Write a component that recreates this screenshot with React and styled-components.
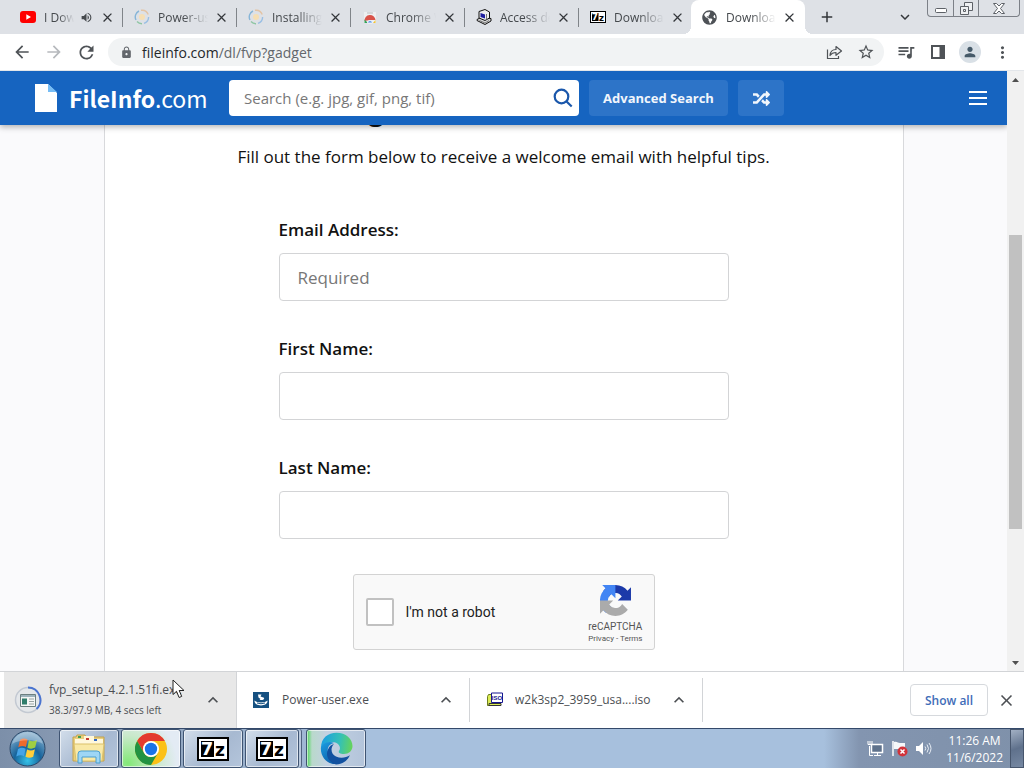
import React from "react";
import styled, { createGlobalStyle, css } from "styled-components";
import {
  MdAdd,
  MdArrowBack,
  MdArrowForward,
  MdClose,
  MdExpandLess,
  MdExpandMore,
  MdLock,
  MdMoreVert,
  MdPerson,
  MdQueueMusic,
  MdRefresh,
  MdStarBorder,
  MdVolumeUp,
} from "react-icons/md";
import { FaGlobeAmericas, FaRandom } from "react-icons/fa";

const GlobalStyle = createGlobalStyle`
  * {
    box-sizing: border-box;
  }

  body {
    margin: 0;
    font-family: "Open Sans", "Noto Sans", sans-serif;
    color: #111;
    overflow: hidden;
  }

  button, input {
    font-family: inherit;
  }

  button {
    padding: 0;
    border: none;
    background: none;
    color: inherit;
    cursor: pointer;
  }

  svg {
    flex: none;
  }
`;

const Desktop = styled.div`
  display: flex;
  flex-direction: column;
  height: 100vh;
`;

// Tab strip
const TabStrip = styled.div`
  display: flex;
  height: 34px;
  padding-left: 9px;
  background: #dee1e6;
`;

const Tab = styled.div`
  position: relative;
  display: flex;
  align-items: center;
  flex: 0 1 114px;
  min-width: 0;
  padding: 0 8px 0 11px;
  font-size: 12px;
  color: #45494d;

  ${({ $divided }) =>
    $divided &&
    css`
      &::after {
        content: "";
        position: absolute;
        right: 0;
        top: 8px;
        width: 1px;
        height: 19px;
        background: #808489;
      }
    `}

  ${({ $active }) =>
    $active &&
    css`
      margin-left: -2px;
      background: #fff;
      border-radius: 8px 8px 0 0;

      &::before,
      &::after {
        content: "";
        position: absolute;
        bottom: 0;
        width: 8px;
        height: 8px;
      }

      &::before {
        right: 100%;
        background: radial-gradient(circle at 0 0, #dee1e6 8px, #fff 8px);
      }

      &::after {
        left: 100%;
        background: radial-gradient(circle at 100% 0, #dee1e6 8px, #fff 8px);
      }
    `}
`;

const TabIcon = styled.span`
  display: flex;
  flex: none;
  width: 16px;
  color: #4d5156;
`;

const TabTitle = styled.span`
  flex: 1;
  min-width: 0;
  margin: 0 6px 0 8px;
  overflow: hidden;
  white-space: nowrap;
  mask-image: linear-gradient(to right, #000 50%, transparent);
`;

const TabClose = styled.button`
  display: flex;
  flex: none;
  margin-left: ${({ $gap }) => $gap || 0}px;
  color: #33363a;
`;

const StripButton = styled.button`
  display: flex;
  align-items: center;
  justify-content: center;
  width: 44px;
  height: 34px;
  color: #33363a;
`;

const StripSpacer = styled.div`
  flex: 1;
`;

const WindowControls = styled.div`
  display: flex;
  height: 17px;
  margin: 0 4px 0 0;
  border: 1px solid #7c8087;
  border-top: none;
  border-radius: 0 0 4px 4px;
`;

const WindowButton = styled.button`
  display: flex;
  align-items: center;
  justify-content: center;
  width: ${({ $wide }) => ($wide ? 41 : 25)}px;

  & + & {
    border-left: 1px solid #7c8087;
  }
`;

// Address bar
const Toolbar = styled.div`
  display: flex;
  align-items: center;
  height: 37px;
  padding: 0 6px;
  border-bottom: 1px solid #e3e6ea;
  background: #fff;
`;

const ToolButton = styled.button`
  display: flex;
  align-items: center;
  justify-content: center;
  flex: none;
  width: 32px;
  height: 28px;
  color: ${({ $muted }) => ($muted ? "#b6b9bd" : "#4f5357")};
`;

const AddressBox = styled.div`
  display: flex;
  align-items: center;
  flex: 1;
  height: 28px;
  margin: 0 6px;
  padding: 0 2px 0 12px;
  border-radius: 14px;
  background: #f1f3f4;
  font-size: 14px;
  color: #63676c;
`;

const Url = styled.span`
  flex: 1;
  margin-left: 9px;

  b {
    font-weight: 400;
    color: #24272a;
  }
`;

const Avatar = styled.span`
  display: flex;
  align-items: center;
  justify-content: center;
  width: 22px;
  height: 22px;
  border-radius: 50%;
  background: #d9e0e6;
  color: #465a69;
`;

// Web page
const Viewport = styled.div`
  display: flex;
  flex: 1;
  min-height: 0;
`;

const Site = styled.div`
  display: flex;
  flex-direction: column;
  flex: 1;
  min-width: 0;
  overflow: hidden;
  background: #fafafc;
`;

const SiteHeader = styled.header`
  position: relative;
  z-index: 1;
  display: flex;
  align-items: center;
  flex: none;
  gap: 10px;
  height: 54px;
  padding: 0 20px 0 35px;
  background: #1664c0;
  box-shadow: 0 2px 6px rgba(0, 0, 0, 0.3);
`;

const Logo = styled.a`
  display: flex;
  align-items: center;
  flex: none;
  gap: 12px;
  width: 184px;
  font-family: "Noto Sans CJK SC", sans-serif;
  font-size: 23px;
  line-height: 36px;
  color: #fff;
  text-decoration: none;
`;

const SearchForm = styled.form`
  display: flex;
  align-items: center;
  flex: 0 1 350px;
  height: 36px;
  padding: 0 6px 0 15px;
  border-radius: 4px;
  background: #fff;
`;

const SearchInput = styled.input`
  flex: 1;
  min-width: 0;
  padding: 0;
  border: none;
  outline: none;
  font-size: 15px;

  &::placeholder {
    color: #777;
  }
`;

const SearchButton = styled.button`
  display: flex;
`;

const HeaderButton = styled.button`
  display: flex;
  align-items: center;
  justify-content: center;
  width: ${({ $width }) => $width}px;
  height: 36px;
  border-radius: 4px;
  background: #2d74c8;
  font-size: 13px;
  font-weight: 700;
  white-space: nowrap;
  color: #f1f6fc;
`;

const MenuButton = styled.button`
  display: flex;
  margin-left: auto;
`;

const Article = styled.main`
  display: flex;
  flex-direction: column;
  align-items: center;
  flex: 1;
  width: 100%;
  max-width: 800px;
  min-height: 0;
  margin: 0 auto;
  border: solid #d8d9dc;
  border-width: 0 1px;
  background: #fff;
`;

const Heading = styled.h1`
  flex: none;
  margin: -38px 0 13px;
  font-size: 28px;
  line-height: 44px;
`;

const Intro = styled.p`
  margin: 0 0 47px;
  font-size: 17px;
  line-height: 26px;
`;

const SignupForm = styled.form`
  display: flex;
  flex-direction: column;
  gap: 35px;
  width: 450px;
  max-width: 100%;
`;

const Field = styled.div`
  display: flex;
  flex-direction: column;
  gap: 11px;
`;

const FieldLabel = styled.label`
  font-size: 17px;
  font-weight: 600;
  line-height: 25px;
`;

const FieldInput = styled.input`
  height: 48px;
  padding: 0 18px;
  border: 1px solid #d3d4d6;
  border-radius: 4px;
  outline: none;
  font-size: 17px;

  &::placeholder {
    color: #777;
  }
`;

const Captcha = styled.div`
  display: flex;
  align-items: center;
  align-self: center;
  width: 302px;
  height: 76px;
  padding: 0 11px 0 12px;
  border: 1px solid #d3d3d3;
  border-radius: 3px;
  background: #f9f9f9;
  font-family: Roboto, sans-serif;
`;

const CaptchaCheck = styled.input`
  appearance: none;
  width: 28px;
  height: 28px;
  margin: 0 12px 0 0;
  border: 2px solid #c1c1c1;
  border-radius: 2px;
  background: #fff;
`;

const CaptchaLabel = styled.label`
  flex: 1;
  font-size: 14px;
  line-height: 17px;
  color: #222;
`;

const CaptchaBrand = styled.div`
  display: flex;
  flex-direction: column;
  align-items: center;
  padding-top: 6px;
  font-size: 10px;
  line-height: 13px;
  color: #555;

  svg {
    margin-bottom: 4px;
  }
`;

const CaptchaLinks = styled.span`
  font-size: 8px;
  line-height: 12px;

  a {
    color: inherit;
    text-decoration: none;
  }
`;

const Scrollbar = styled.div`
  display: flex;
  flex-direction: column;
  justify-content: space-between;
  align-items: center;
  flex: none;
  width: 17px;
  background: #f1f1f1;
`;

const ScrollArrow = styled.button`
  display: flex;
  align-items: center;
  justify-content: center;
  width: 17px;
  height: 17px;
`;

const ScrollTrack = styled.div`
  display: grid;
  grid-template-rows: 147fr 294fr 125fr;
  flex: 1;
  width: 13px;
`;

const ScrollThumb = styled.div`
  grid-row: 2;
  background: #c1c1c1;
`;

// Downloads
const DownloadBar = styled.div`
  display: flex;
  align-items: center;
  height: 57px;
  padding: 0 8px 0 4px;
  border-top: 1px solid #d2d4d7;
  background: #fff;
`;

const DownloadItem = styled.div`
  position: relative;
  display: flex;
  align-items: center;
  flex: 0 1 233px;
  min-width: 0;
  height: ${({ $hovered }) => ($hovered ? 56 : 44)}px;
  padding: 0 13px 0 ${({ $hovered }) => ($hovered ? 10 : 16)}px;
  border-right: 1px solid #d2d4d7;
  background: ${({ $hovered }) => ($hovered ? "#e8e8e8" : "#fff")};
  color: #4c4f53;
`;

const DownloadText = styled.div`
  flex: 1;
  min-width: 0;
  margin-left: ${({ $gap }) => $gap}px;
  overflow: hidden;
  white-space: nowrap;
  font-size: 12px;
  line-height: 20px;
`;

const DownloadStatus = styled.div`
  font-size: 10px;
`;

const ItemMenu = styled.button`
  display: flex;
  margin-left: 4px;
`;

const ShowAll = styled.button`
  width: 78px;
  height: 32px;
  margin: 0 9px 0 auto;
  border: 1px solid #d6d9dd;
  border-radius: 4px;
  font-size: 12px;
  font-weight: 600;
  color: #3f6db8;
`;

const BarClose = styled.button`
  display: flex;
  color: #4c4f53;
`;

const Cursor = styled.svg`
  position: absolute;
  left: 168px;
  top: 7px;
`;

// Taskbar
const Taskbar = styled.div`
  display: flex;
  height: 40px;
  border-top: 1px solid #34496a;
  background: linear-gradient(
    to right,
    #7c8fa9 0,
    #8799b2 60px,
    #a7c0dd 370px,
    #a7c0dd calc(100% - 200px),
    #8395b0 calc(100% - 165px),
    #7f91aa 100%
  );
`;

const StartButton = styled.button`
  display: flex;
  align-items: center;
  justify-content: center;
  width: 55px;
  height: 39px;
`;

const TaskList = styled.div`
  display: flex;
  gap: 2px;
  padding-left: 4px;
`;

const TaskButton = styled.button`
  display: flex;
  align-items: center;
  justify-content: center;
  width: ${({ $width }) => $width || 60}px;
  height: 39px;
  margin-right: ${({ $stacked }) => ($stacked ? 5 : 0)}px;
  border: 1px solid #3f5472;
  border-radius: 3px;
  background: ${({ $tint }) =>
    $tint || "linear-gradient(135deg, #d3deeb, #a7b9d1 55%, #b4c5db)"};
  box-shadow: inset 0 0 0 1px rgba(255, 255, 255, 0.6)
    ${({ $stacked }) => ($stacked ? ", 2px 0 0 #b8c8dc, 3px 0 0 #50637f" : "")};
`;

const Tray = styled.div`
  display: flex;
  align-items: center;
  gap: 7px;
  margin-left: auto;
`;

const Clock = styled.div`
  margin-left: 7px;
  font-size: 12px;
  line-height: 17px;
  text-align: center;
  color: #fff;
`;

const ShowDesktop = styled.button`
  width: 14px;
  height: 39px;
  border: 1px solid #47566d;
  background: linear-gradient(160deg, #a2b0c4, #5f718c 50%, #7688a2);
`;

const YoutubeIcon = () => (
  <svg width="16" height="16" viewBox="0 0 16 16">
    <rect y="2" width="16" height="12" rx="3" fill="#f00" />
    <path d="M6.3 5.2v5.6L11 8z" fill="#fff" />
  </svg>
);

const SwirlIcon = () => (
  <svg width="16" height="16" viewBox="0 0 16 16" fill="none" strokeWidth="1.4">
    <circle cx="8" cy="8" r="3" fill="#f6dfb4" />
    <path d="M2 11A6.6 6.6 0 0 1 5 2" stroke="#86b5d8" />
    <path d="M7 1.3a6.6 6.6 0 0 1 7.2 4.3" stroke="#e3c3a4" />
    <path d="M14.6 8A6.6 6.6 0 0 1 10 14.3" stroke="#9abfe4" />
    <path d="M8 14.7a6.6 6.6 0 0 1-5-2.2" stroke="#8fc6a4" />
  </svg>
);

const WebstoreIcon = () => (
  <svg width="16" height="16" viewBox="0 0 16 16">
    <path d="M2 3h12v11H2z" fill="#edeff1" />
    <path d="M5 3h6v2H5z" fill="#d3d6d9" />
    <path d="M2.5 12a5.5 5.5 0 0 1 11-1H8z" fill="#d9534a" />
    <path d="M2.5 10.500 6 14H2.500z" fill="#36a35a" />
    <path d="M13.500 11 11 14h2.500z" fill="#f4c430" />
    <path d="M5.500 14a2.500 2.500 0 0 1 5 0z" fill="#5b93e6" stroke="#fff" strokeWidth="0.8" />
  </svg>
);

const ComputerIcon = () => (
  <svg width="16" height="16" viewBox="0 0 16 16" strokeLinejoin="round">
    <path d="m1 10.500 4-2 10 1v2.500l-6 3.500-8-4z" fill="#d8d8d8" stroke="#111" />
    <path d="m3 2.500 6-2 4.500 2.500v6L9 11.500 3 9z" fill="#eee" stroke="#111" />
    <path d="m4.500 4 4.500 1.500v4L4.500 8z" fill="#1d1d9e" />
    <path d="m10.500 5v5.500M3.500 11.500 9 14l4-2.500" fill="none" stroke="#777" />
  </svg>
);

const SevenZipIcon = ({ width = 32, height = 24 }) => (
  <svg width={width} height={height} viewBox="0 0 32 24">
    <path d="M0 0h32v24H0z" />
    <path d="M2 2h28v20H2z" fill="#fff" />
    <path d="M4 4h13v16H4z" />
    <text x="10" y="18" textAnchor="middle" fontFamily="DejaVu Sans" fontSize="18" fontWeight="700" fill="#fff">
      7
    </text>
    <text x="23" y="19" textAnchor="middle" fontFamily="DejaVu Sans" fontSize="17" fontWeight="700">
      z
    </text>
  </svg>
);

const ShareIcon = () => (
  <svg width="17" height="17" viewBox="0 0 17 17" fill="none" stroke="currentColor" strokeWidth="1.2">
    <path d="M1.500 5.500v9h11V12" />
    <path d="M4 11.500c.3-4 2.600-6 6-6V2.500L15.500 7 10 11.300V8.500c-2.700 0-4.500.8-6 3z" strokeLinejoin="round" />
  </svg>
);

const SidePanelIcon = () => (
  <svg width="14" height="14" viewBox="0 0 14 14">
    <path d="M1 1h12v12H1z" fill="none" stroke="currentColor" strokeWidth="2" />
    <path d="M8.500 1H13v12H8.500z" fill="currentColor" />
  </svg>
);

const FileIcon = () => (
  <svg width="22" height="28" viewBox="0 0 22 28">
    <path d="M0 0h13l9 9v19H0z" fill="#fff" />
    <path d="m13 0 9 8h-9z" fill="#77bdf5" />
  </svg>
);

const SearchIcon = () => (
  <svg width="20" height="20" viewBox="0 0 20 20" fill="none" stroke="#1a57ab" strokeWidth="2.2">
    <circle cx="8.500" cy="8.500" r="6.800" />
    <path d="m13.300 13.300 5.400 5.200" />
  </svg>
);

const RecaptchaIcon = () => (
  <svg width="31" height="31" viewBox="0 0 64 64">
    <path
      fill="#1c3aa9"
      d="M64 31.955c-.002-.46-.012-.918-.033-1.373V4.640l-7.172 7.170C50.925 4.621 41.990.036 31.985.036c-10.414 0-19.665 4.966-25.507 12.657l11.756 11.880a15.600 15.600 0 0 1 4.763-5.347c2.053-1.602 4.962-2.912 8.987-2.912.486 0 .862.057 1.138.164 4.987.394 9.309 3.146 11.854 7.140l-8.321 8.320c10.540-.040 22.447-.065 27.345.017"
    />
    <path
      fill="#4285f4"
      d="M31.862.037c-.460.002-.918.012-1.373.033H4.547l7.170 7.172C4.528 13.110-.057 22.046-.057 32.050c0 10.414 4.966 19.665 12.657 25.507l11.880-11.756a15.600 15.600 0 0 1-5.347-4.763c-1.602-2.053-2.912-4.962-2.912-8.987 0-.486.057-.862.164-1.138.394-4.987 3.146-9.309 7.140-11.854l8.320 8.321c-.040-10.540-.065-22.447.017-27.345"
    />
    <path
      fill="#ababab"
      d="M-.057 32.050c.002.460.012.918.033 1.373v25.942l7.172-7.170c5.868 7.187 14.804 11.773 24.809 11.773 10.414 0 19.665-4.966 25.507-12.657l-11.756-11.880a15.600 15.600 0 0 1-4.763 5.347c-2.053 1.602-4.962 2.912-8.987 2.912-.486 0-.862-.057-1.138-.164-4.987-.394-9.309-3.146-11.854-7.140l8.321-8.320c-10.540.040-22.447.065-27.345-.017"
    />
  </svg>
);

const ProgressIcon = () => (
  <svg width="28" height="28" viewBox="0 0 28 28">
    <circle cx="14" cy="14" r="12.500" fill="#e4e7ea" stroke="#c3c9d2" strokeWidth="1.500" />
    <path d="M14 1.500A12.500 12.500 0 0 1 22.500 23" fill="none" stroke="#4a74d0" strokeWidth="2" />
    <path d="M6.500 8.500h15v12h-15z" fill="#f4f6f5" stroke="#6c7f80" />
    <path d="M7 9h14v2H7z" fill="#9db2bb" />
    <path d="M8 12.500h5v6H8z" fill="#2f7d6b" />
    <path d="M15 13h5M15 15.500h5M15 18h5" stroke="#9aa4a4" />
  </svg>
);

const InstallerIcon = () => (
  <svg width="16" height="16" viewBox="0 0 16 16">
    <path d="M0 0h16v16H0z" fill="#155080" />
    <path d="M1.500 8.500c2 2.500 11 2.500 13 0 .5 6.500-13.500 6.500-13 0z" fill="#fff" />
    <path d="M5 2.500h3.500l-1 2 3.500 1.200c1 1.800-2.500 3-4.500 2L7.500 7 5.500 5.500z" fill="#fff" />
    <path d="M4 11q4 1.500 8 0" fill="none" stroke="#155080" />
  </svg>
);

const IsoIcon = () => (
  <svg width="17" height="16" viewBox="0 0 17 16">
    <path d="M2.500 2.500H7v11H1.500v-9z" fill="#dcec55" stroke="#6e7f1d" />
    <path d="M3 11.500h12v2H3z" fill="#dcec55" stroke="#333" />
    <path d="M5.500 1h11v9.500h-11z" fill="#fff" stroke="#16168f" />
    <text x="11" y="8" textAnchor="middle" fontFamily="Liberation Sans" fontSize="6" fontWeight="700" fill="#16168f">
      ISO
    </text>
  </svg>
);

const WindowsOrb = () => (
  <svg width="37" height="37" viewBox="0 0 37 37">
    <defs>
      <radialGradient id="orb" cx="50%" cy="85%" r="85%">
        <stop offset="0" stopColor="#35c2e8" />
        <stop offset="0.45" stopColor="#17649c" />
        <stop offset="1" stopColor="#8fb4d0" />
      </radialGradient>
    </defs>
    <circle cx="18.500" cy="18.500" r="17.500" fill="url(#orb)" stroke="#2b4768" />
    <path d="M11 10c3-2 5-1.800 7.500-.4l-1.600 7.500c-2.400-1.400-4.700-1.400-7.600.2z" fill="#ee6a2c" />
    <path d="M20 10.300c2.700 1.400 5 1.300 8-.3l-1.800 7.600c-2.800 1.500-5 1.500-7.800.2z" fill="#9fce43" />
    <path d="M9 18.900c2.900-1.600 5.200-1.500 7.600-.1L15 26.200c-2.500-1.400-4.800-1.300-7.700.3z" fill="#45a4e8" />
    <path d="M18.100 19.400c2.700 1.400 5 1.300 7.800-.2l-1.700 7.500c-2.800 1.500-5 1.400-7.700 0z" fill="#ffce3a" />
    <path d="M3 14A16 16 0 0 1 34 14C26 9 11 9 3 14z" fill="#fff" opacity="0.300" />
  </svg>
);

const FolderIcon = () => (
  <svg width="34" height="32" viewBox="0 0 34 32">
    <path d="M1 4h3l1-2h8l1 2h18v24H1z" fill="#e9cf7d" stroke="#c3a24d" />
    <path d="M3 6h9V3h10v3h9v5H3z" fill="#fff8dc" />
    <path d="M6 3h3v2H6z" fill="#3f9d55" />
    <path d="M14 5h3v2h-3z" fill="#c73a32" />
    <path d="M22 6h3v2h-3z" fill="#3469c4" />
    <path d="M2 11h30l-2 17H4z" fill="#f9e9a6" stroke="#dbc16a" />
    <path d="M6 30v-9q0-3 3-3h16q3 0 3 3v9h-4v-6H10v6z" fill="#9ed6f5" stroke="#4b9fcf" />
  </svg>
);

const ChromeIcon = () => (
  <svg width="32" height="32" viewBox="0 0 32 32">
    <circle cx="16" cy="16" r="16" fill="#fbc116" />
    <path d="M2.140 8A16 16 0 0 1 29.860 8H16a8 8 0 0 0-6.930 12z" fill="#e33b2e" />
    <path d="M2.140 8A16 16 0 0 0 16 32l6.930-12a8 8 0 0 1-13.860 0z" fill="#229342" />
    <circle cx="16" cy="16" r="8" fill="#fff" />
    <circle cx="16" cy="16" r="6.200" fill="#1a73e8" />
  </svg>
);

const EdgeIcon = () => (
  <svg width="33" height="33" viewBox="0 0 33 33">
    <defs>
      <linearGradient id="edge-top" x1="0" x2="1" y1="0.4" y2="0.5">
        <stop offset="0" stopColor="#1b9de2" />
        <stop offset="0.6" stopColor="#35c1b5" />
        <stop offset="1" stopColor="#66d35a" />
      </linearGradient>
      <linearGradient id="edge-side" x1="0" x2="0.7" y1="0" y2="1">
        <stop offset="0" stopColor="#1b9de2" />
        <stop offset="1" stopColor="#0c59a4" />
      </linearGradient>
    </defs>
    <path d="M1 16C1 6 8 .8 16.500.8 26 .8 32.500 7 32.500 14c0 5-4 8-8.500 8-4 0-6-1.400-5-3 3-4-1-9-7-9-5 0-9 3-11 6z" fill="url(#edge-top)" />
    <path d="M1 15c3-5 9-6 13-4-5 1-7 5-6 9 1.500 6 8 8 15 7-3 4-7 5.500-11 4.800C5 30 0 23 1 15z" fill="url(#edge-side)" />
    <path d="M14 12c-4 4-3 10 2 12.500 5 2.400 10 1.200 14-1.200-3 6-8 9.200-14 9.200-7-2-11-9-8-15 1-3 3.500-5 6-5.500z" fill="#1251a0" />
  </svg>
);

const NetworkIcon = () => (
  <svg width="17" height="17" viewBox="0 0 17 17" fill="none" stroke="#fff">
    <path d="M4.500 4.500h11v8h-11z" fill="#5f728c" strokeWidth="1.500" />
    <path d="M7 15.500h7M10.500 13v2M2.500 6v9.500H6" />
    <path d="M1 1v3.500h4V1M3 1v3" />
  </svg>
);

const FlagIcon = () => (
  <svg width="17" height="17" viewBox="0 0 17 17">
    <path d="M2 1v15" stroke="#fff" strokeWidth="1.500" />
    <path d="M3 2c3-1 4 1 6 1h5v7c-3 1-5-1-7-1H3z" fill="#f6f8fa" />
    <circle cx="11.500" cy="11.500" r="5" fill="#d2333a" />
    <path d="m9.500 9.500 4 4m0-4-4 4" stroke="#fff" strokeWidth="1.500" />
  </svg>
);

const SpeakerIcon = () => (
  <svg width="17" height="17" viewBox="0 0 17 17">
    <path d="M1 6h3l4-4v13l-4-4H1z" fill="#fff" />
    <path d="M10 6.500q1.500 2 0 4M12 4.500q3 4 0 8M14 3q4 5.500 0 11" fill="none" stroke="#e8eef5" />
  </svg>
);

const tabs = [
  { title: "I Downloaded", icon: <YoutubeIcon />, audio: true, divided: true },
  { title: "Power-user", icon: <SwirlIcon />, divided: true },
  { title: "Installing P", icon: <SwirlIcon />, divided: true },
  { title: "Chrome Web", icon: <WebstoreIcon />, divided: true },
  { title: "Access denied", icon: <ComputerIcon />, divided: true },
  { title: "Download", icon: <SevenZipIcon width={16} height={12} /> },
  { title: "Download", icon: <FaGlobeAmericas size={15} />, active: true },
];

const fields = [
  { id: "email", label: "Email Address:", type: "email", placeholder: "Required" },
  { id: "first-name", label: "First Name:", type: "text" },
  { id: "last-name", label: "Last Name:", type: "text" },
];

export default function App() {
  return (
    <Desktop>
      <GlobalStyle />

      <TabStrip>
        {tabs.map((tab, index) => (
          <Tab key={index} $active={tab.active} $divided={tab.divided}>
            <TabIcon>{tab.icon}</TabIcon>
            <TabTitle>{tab.title}</TabTitle>
            {tab.audio && <MdVolumeUp size={13} />}
            <TabClose $gap={tab.audio ? 7 : 0} aria-label="Close tab">
              <MdClose size={15} />
            </TabClose>
          </Tab>
        ))}
        <StripButton aria-label="New tab">
          <MdAdd size={18} />
        </StripButton>
        <StripSpacer />
        <StripButton aria-label="Search tabs">
          <MdExpandMore size={18} />
        </StripButton>
        <WindowControls>
          <WindowButton aria-label="Minimize">
            <svg width="12" height="12" fill="#fff" stroke="#5d6167">
              <rect x="0.5" y="6.5" width="11" height="4" rx="1" />
            </svg>
          </WindowButton>
          <WindowButton aria-label="Restore">
            <svg width="13" height="13" fill="#eef0f2" stroke="#5d6167">
              <path d="M4.500.500h8v8h-8z" />
              <path d="M.500 4.500h8v8h-8z" />
              <path d="M3.500 7.500h2v2h-2z" />
            </svg>
          </WindowButton>
          <WindowButton $wide aria-label="Close">
            <svg width="12" height="11" fill="#fff" stroke="#5d6167">
              <path d="M.500.500h3L6 3 8.500.500h3l-4 5 4 5h-3L6 8l-2.500 2.500h-3l4-5z" />
            </svg>
          </WindowButton>
        </WindowControls>
      </TabStrip>

      <Toolbar>
        <ToolButton aria-label="Back">
          <MdArrowBack size={20} />
        </ToolButton>
        <ToolButton $muted aria-label="Forward">
          <MdArrowForward size={20} />
        </ToolButton>
        <ToolButton aria-label="Reload">
          <MdRefresh size={21} />
        </ToolButton>
        <AddressBox>
          <MdLock size={13} />
          <Url>
            <b>fileinfo.com</b>/dl/fvp?gadget
          </Url>
          <ToolButton aria-label="Share">
            <ShareIcon />
          </ToolButton>
          <ToolButton aria-label="Bookmark">
            <MdStarBorder size={18} />
          </ToolButton>
        </AddressBox>
        <ToolButton aria-label="Media">
          <MdQueueMusic size={20} />
        </ToolButton>
        <ToolButton aria-label="Side panel">
          <SidePanelIcon />
        </ToolButton>
        <ToolButton aria-label="Profile">
          <Avatar>
            <MdPerson size={16} />
          </Avatar>
        </ToolButton>
        <ToolButton aria-label="Menu">
          <MdMoreVert size={19} />
        </ToolButton>
      </Toolbar>

      <Viewport>
        <Site>
          <SiteHeader>
            <Logo href="#">
              <FileIcon />
              <span>
                <b>FileInfo</b>.com
              </span>
            </Logo>
            <SearchForm>
              <SearchInput aria-label="Search" placeholder="Search (e.g. jpg, gif, png, tif)" />
              <SearchButton type="button" aria-label="Search">
                <SearchIcon />
              </SearchButton>
            </SearchForm>
            <HeaderButton $width={139}>Advanced Search</HeaderButton>
            <HeaderButton $width={46} aria-label="Random file type">
              <FaRandom size={17} />
            </HeaderButton>
            <MenuButton aria-label="Menu">
              <svg width="18" height="16" stroke="#fff" strokeWidth="2">
                <path d="M0 2h18M0 8h18M0 14h18" />
              </svg>
            </MenuButton>
          </SiteHeader>
          <Article>
            <Heading>Register File Viewer Plus</Heading>
            <Intro>Fill out the form below to receive a welcome email with helpful tips.</Intro>
            <SignupForm>
              {fields.map((field) => (
                <Field key={field.id}>
                  <FieldLabel htmlFor={field.id}>{field.label}</FieldLabel>
                  <FieldInput id={field.id} type={field.type} placeholder={field.placeholder} />
                </Field>
              ))}
              <Captcha>
                <CaptchaCheck id="robot" type="checkbox" />
                <CaptchaLabel htmlFor="robot">I'm not a robot</CaptchaLabel>
                <CaptchaBrand>
                  <RecaptchaIcon />
                  <span>reCAPTCHA</span>
                  <CaptchaLinks>
                    <a href="#">Privacy</a> - <a href="#">Terms</a>
                  </CaptchaLinks>
                </CaptchaBrand>
              </Captcha>
            </SignupForm>
          </Article>
        </Site>
        <Scrollbar>
          <ScrollArrow aria-label="Scroll up">
            <svg width="7" height="4">
              <path d="M0 4 3.500 0 7 4z" fill="#505050" />
            </svg>
          </ScrollArrow>
          <ScrollTrack>
            <ScrollThumb />
          </ScrollTrack>
          <ScrollArrow aria-label="Scroll down">
            <svg width="7" height="4">
              <path d="M0 0h7L3.500 4z" fill="#505050" />
            </svg>
          </ScrollArrow>
        </Scrollbar>
      </Viewport>

      <DownloadBar>
        <DownloadItem $hovered>
          <ProgressIcon />
          <DownloadText $gap={7}>
            fvp_setup_4.2.1.51fi.exe
            <DownloadStatus>38.3/97.9 MB, 4 secs left</DownloadStatus>
          </DownloadText>
          <ItemMenu aria-label="Download options">
            <MdExpandLess size={20} />
          </ItemMenu>
          <Cursor width="14" height="20" viewBox="0 0 14 20">
            <path d="M1 1v14.500l3.500-3.200 2.600 6.200 2.600-1.100L7.200 11.500H12z" fill="#fff" stroke="#222" />
          </Cursor>
        </DownloadItem>
        <DownloadItem>
          <InstallerIcon />
          <DownloadText $gap={13}>Power-user.exe</DownloadText>
          <ItemMenu aria-label="Download options">
            <MdExpandLess size={20} />
          </ItemMenu>
        </DownloadItem>
        <DownloadItem>
          <IsoIcon />
          <DownloadText $gap={12}>w2k3sp2_3959_usa....iso</DownloadText>
          <ItemMenu aria-label="Download options">
            <MdExpandLess size={20} />
          </ItemMenu>
        </DownloadItem>
        <ShowAll>Show all</ShowAll>
        <BarClose aria-label="Close downloads">
          <MdClose size={19} />
        </BarClose>
      </DownloadBar>

      <Taskbar>
        <StartButton aria-label="Start">
          <WindowsOrb />
        </StartButton>
        <TaskList>
          <TaskButton aria-label="Explorer">
            <FolderIcon />
          </TaskButton>
          <TaskButton
            aria-label="Chrome"
            $tint="radial-gradient(circle at 10% 90%, #83e878, #c9e9cb 45%, #e3ebf4 80%)"
          >
            <ChromeIcon />
          </TaskButton>
          <TaskButton aria-label="7-Zip">
            <SevenZipIcon />
          </TaskButton>
          <TaskButton $width={54} $stacked aria-label="7-Zip">
            <SevenZipIcon />
          </TaskButton>
          <TaskButton
            aria-label="Edge"
            $tint="linear-gradient(to right, #4fd65c 0, #b9d9cb 5px, #c3d1e2 20px, #b3c4da)"
          >
            <EdgeIcon />
          </TaskButton>
        </TaskList>
        <Tray>
          <NetworkIcon />
          <FlagIcon />
          <SpeakerIcon />
          <Clock>
            <div>11:26 AM</div>
            <div>11/6/2022</div>
          </Clock>
          <ShowDesktop aria-label="Show desktop" />
        </Tray>
      </Taskbar>
    </Desktop>
  );
}
